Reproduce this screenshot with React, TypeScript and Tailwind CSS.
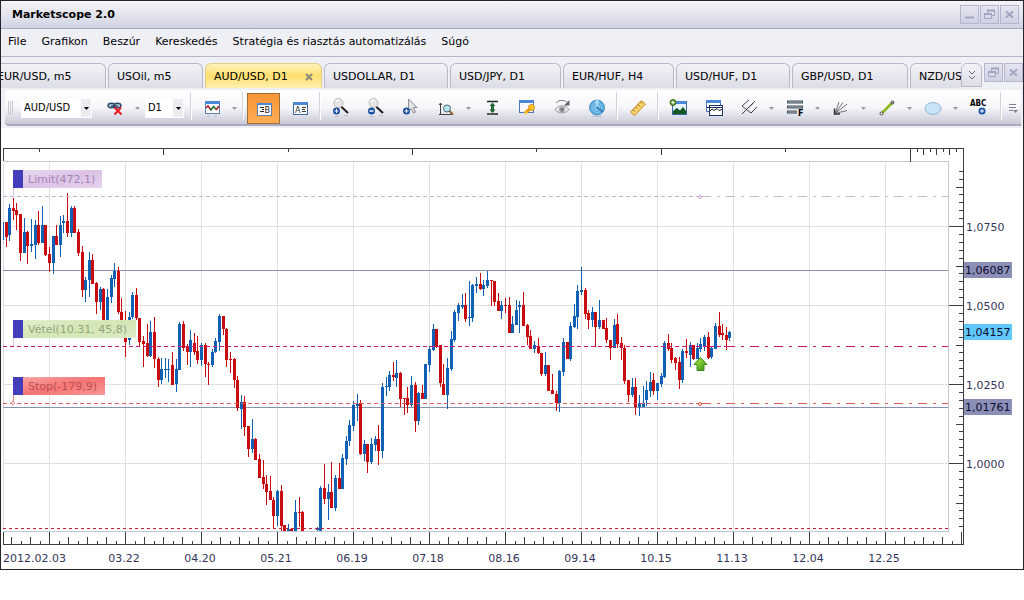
import type { ReactNode } from "react";

const TITLE = "Marketscope 2.0";

const MENU = ["File", "Grafikon", "Beszúr", "Kereskedés", "Stratégia és riasztás automatizálás", "Súgó"];

const TABS = [
  { label: "EUR/USD, m5", width: "w-[118px]" },
  { label: "USOil, m5", width: "w-[95px]" },
  { label: "AUD/USD, D1", width: "w-[117px]", active: true },
  { label: "USDOLLAR, D1", width: "w-[124px]" },
  { label: "USD/JPY, D1", width: "w-[111px]" },
  { label: "EUR/HUF, H4", width: "w-[111px]" },
  { label: "USD/HUF, D1", width: "w-[114px]" },
  { label: "GBP/USD, D1", width: "w-[116px]" },
  { label: "NZD/USD, D1", width: "w-[116px]" },
];

type Bar = [dir: "u" | "d", high: number, top: number, bottom: number, low: number];

// Each block holds consecutive daily bars; values are thirds of a pixel below `base`.
const BLOCKS: { first: number; base: number; bars: Bar[] }[] = [
  {
    first: -12,
    base: 140,
    bars: [
      ["d", 247, 247, 290, 320], ["u", 193, 204, 285, 302], ["d", 174, 204, 212, 240], ["d", 190, 210, 224, 270],
      ["d", 222, 222, 338, 362], ["u", 234, 276, 338, 340], ["d", 274, 276, 317, 371], ["u", 237, 313, 318, 335],
      ["u", 240, 255, 314, 356], ["d", 213, 255, 308, 314], ["u", 198, 255, 308, 308], ["d", 255, 255, 345, 348],
      ["d", 322, 342, 369, 396], ["u", 288, 289, 369, 401], ["d", 255, 288, 314, 316], ["u", 228, 255, 314, 350],
      ["u", 225, 243, 250, 278], ["d", 160, 243, 278, 290], ["u", 198, 204, 278, 290], ["d", 198, 204, 278, 278],
      ["d", 267, 276, 338, 348], ["d", 318, 336, 450, 470], ["u", 411, 420, 450, 485], ["u", 336, 360, 421, 472],
      ["d", 342, 360, 431, 433], ["d", 426, 429, 486, 521], ["u", 441, 447, 486, 510], ["d", 444, 447, 540, 560],
      ["u", 447, 471, 540, 560], ["u", 405, 414, 471, 488], ["u", 369, 392, 417, 440], ["d", 381, 392, 517, 522],
      ["d", 474, 516, 545, 560], ["d", 513, 540, 605, 650], ["u", 516, 530, 600, 616], ["u", 456, 465, 530, 538],
      ["d", 444, 465, 535, 540], ["d", 534, 535, 605, 617], ["d", 588, 603, 612, 680], ["d", 552, 609, 648, 650],
      ["u", 543, 576, 648, 650], ["d", 531, 576, 658, 683], ["d", 650, 656, 720, 740], ["u", 654, 687, 720, 732],
      ["u", 654, 687, 690, 714], ["u", 657, 687, 690, 726], ["d", 636, 675, 735, 735], ["u", 657, 687, 733, 755],
      ["u", 546, 552, 690, 690], ["d", 543, 552, 625, 632], ["d", 612, 620, 635, 676], ["u", 570, 599, 637, 680],
      ["d", 579, 610, 635, 646], ["d", 588, 632, 660, 672],
    ],
  },
  {
    first: 42,
    base: 290,
    bars: [
      ["u", 160, 165, 210, 228], ["d", 158, 165, 222, 260], ["d", 216, 222, 225, 284], ["u", 178, 186, 225, 230],
      ["u", 144, 153, 186, 188], ["u", 72, 79, 156, 182], ["d", 78, 79, 118, 134], ["d", 114, 117, 210, 230],
      ["d", 186, 206, 210, 248], ["d", 205, 207, 270, 293], ["d", 258, 270, 355, 362], ["u", 315, 336, 356, 416],
      ["d", 318, 336, 410, 437], ["d", 408, 408, 476, 500], ["u", 387, 447, 476, 488], ["d", 444, 447, 509, 509],
      ["d", 492, 507, 563, 563], ["d", 510, 560, 583, 597], ["d", 555, 582, 605, 644], ["d", 558, 603, 631, 631],
      ["d", 621, 630, 677, 715], ["u", 600, 603, 677, 707], ["d", 585, 603, 708, 722], ["d", 705, 706, 722, 722],
      ["u", 702, 716, 722, 722], ["d", 714, 716, 722, 722], ["u", 630, 666, 722, 722], ["d", 621, 665, 668, 710],
      ["d", 663, 666, 722, 722],
    ],
  },
  {
    first: 74,
    base: 290,
    bars: [
      ["u", 712, 714, 720, 722], ["u", 588, 594, 722, 722], ["d", 522, 594, 626, 642], ["u", 582, 606, 627, 690],
      ["d", 516, 606, 653, 655], ["u", 555, 564, 653, 662], ["d", 519, 564, 596, 597], ["u", 493, 504, 597, 597],
      ["u", 438, 452, 506, 524], ["u", 391, 405, 453, 467], ["u", 333, 346, 407, 422], ["u", 312, 342, 348, 392],
      ["d", 330, 339, 491, 494], ["u", 450, 462, 491, 513], ["d", 462, 462, 515, 548], ["u", 444, 462, 515, 521],
      ["u", 438, 447, 464, 482], ["d", 405, 447, 482, 524], ["u", 279, 291, 482, 503], ["u", 262, 288, 292, 318],
      ["u", 243, 255, 291, 302], ["d", 215, 255, 262, 273], ["u", 210, 249, 263, 290], ["d", 246, 249, 326, 350],
      ["d", 324, 324, 328, 374], ["d", 291, 324, 345, 368], ["u", 258, 285, 345, 350], ["d", 276, 285, 393, 426],
      ["u", 306, 309, 393, 405], ["d", 285, 309, 326, 327], ["u", 222, 222, 326, 326], ["u", 168, 178, 224, 245],
      ["u", 102, 117, 180, 182],
    ],
  },
  {
    first: 107,
    base: 250,
    bars: [
      ["d", 237, 237, 290, 293], ["d", 285, 286, 400, 410], ["d", 342, 403, 435, 435], ["u", 324, 353, 434, 476],
      ["u", 243, 267, 357, 362], ["u", 180, 186, 270, 276], ["u", 159, 165, 189, 212], ["u", 132, 165, 170, 178],
      ["d", 129, 165, 207, 215], ["u", 93, 200, 205, 227], ["u", 102, 105, 204, 215], ["u", 81, 102, 107, 130],
      ["d", 69, 101, 117, 119], ["u", 90, 105, 117, 137], ["u", 62, 90, 108, 113], ["d", 90, 90, 94, 168],
      ["d", 93, 93, 156, 168], ["d", 129, 153, 183, 183], ["u", 153, 166, 183, 206], ["d", 144, 165, 168, 188],
      ["d", 141, 165, 248, 248], ["u", 198, 222, 248, 248], ["u", 150, 180, 224, 226], ["u", 153, 165, 170, 250],
      ["d", 126, 165, 227, 228], ["d", 222, 225, 260, 285], ["d", 240, 258, 297, 298], ["u", 273, 286, 297, 310],
      ["d", 264, 288, 309, 312], ["d", 309, 309, 373, 377], ["u", 306, 346, 372, 377], ["d", 345, 345, 422, 423],
      ["d", 372, 420, 432, 433], ["d", 423, 432, 459, 482], ["u", 360, 363, 459, 486], ["u", 264, 276, 365, 377],
      ["d", 276, 276, 327, 327], ["u", 216, 228, 327, 332], ["u", 162, 198, 230, 234], ["u", 105, 123, 200, 237],
      ["u", 51, 120, 126, 135], ["d", 114, 120, 192, 206], ["d", 180, 188, 210, 237], ["u", 171, 186, 210, 230],
      ["d", 186, 186, 230, 292], ["u", 150, 210, 230, 237], ["d", 210, 210, 237, 237], ["d", 204, 234, 270, 278],
      ["d", 270, 270, 293, 329], ["u", 207, 225, 293, 293], ["d", 192, 222, 281, 293], ["d", 261, 278, 294, 329],
      ["d", 285, 293, 392, 402], ["d", 390, 390, 434, 455], ["u", 384, 411, 435, 440], ["d", 384, 411, 471, 494],
      ["u", 435, 459, 472, 497],
    ],
  },
  {
    first: 164,
    base: 290,
    bars: [
      ["u", 288, 340, 350, 351], ["u", 273, 300, 329, 347], ["u", 246, 275, 302, 320], ["d", 249, 270, 302, 314],
      ["u", 279, 279, 302, 329], ["u", 249, 258, 281, 290], ["u", 153, 159, 261, 264], ["d", 132, 159, 177, 182],
      ["d", 159, 173, 209, 218], ["d", 200, 204, 218, 240], ["d", 201, 216, 270, 297], ["u", 177, 183, 270, 278],
      ["d", 147, 183, 189, 204], ["u", 156, 165, 195, 230], ["d", 165, 165, 206, 209], ["u", 159, 174, 207, 207],
      ["u", 144, 163, 176, 185], ["u", 135, 141, 168, 182], ["d", 126, 141, 204, 206], ["u", 171, 174, 202, 206],
      ["u", 99, 108, 176, 176], ["d", 66, 108, 134, 141], ["d", 102, 129, 136, 150], ["d", 111, 134, 150, 180],
      ["u", 123, 126, 143, 153],
    ],
  },
];

const DATES = ["03.22", "04.20", "05.21", "06.19", "07.18", "08.16", "09.14", "10.15", "11.13", "12.04", "12.25"];

const PRICES = [
  { y: 227, label: "1,0750" },
  { y: 306, label: "1,0500" },
  { y: 385, label: "1,0250" },
  { y: 464, label: "1,0000" },
];

const PRICE_TAGS = [
  { y: 262, label: "1,06087", fill: "#8b8fb5" },
  { y: 324, label: "1,04157", fill: "#62c8fc" },
  { y: 399, label: "1,01761", fill: "#8b8fb5" },
];

const ORDERS = [
  { y: 170, lineY: 196, width: 79, label: "Limit(472,1)", fill: "#dcc3e6", text: "#a384b4", stem: "#d9c6e4" },
  { y: 320, lineY: 346, width: 113, label: "Vétel(10.31, 45,8)", fill: "#d3e6b4", text: "#90a67c", stem: "#d9c6e4" },
  { y: 377, lineY: 403, width: 82, label: "Stop(-179,9)", fill: "#f67474", text: "#b85252", stem: "#f08c8c" },
];

function range(n: number) {
  return Array.from({ length: n }, (_, i) => i);
}

function Candles() {
  return (
    <g shapeRendering="crispEdges">
      <rect x="3" y="222" width="1" height="18" fill="#1060b4" />
      {BLOCKS.flatMap(({ first, base, bars }) =>
        bars.map(([dir, high, top, bottom, low], i) => {
          const x = Math.floor(49.5 + ((first + i) * 76) / 21);
          const y = (v: number) => Math.round(base + v / 3);
          const fill = dir === "u" ? "#1060b4" : "#c80c10";
          return (
            <g key={first + i} fill={fill}>
              <rect x={x} y={y(high)} width="1" height={Math.max(1, y(low) - y(high))} />
              <rect x={x - 1} y={y(top)} width="3" height={Math.max(1, y(bottom) - y(top))} />
            </g>
          );
        })
      )}
    </g>
  );
}

function Ticks() {
  return (
    <g shapeRendering="crispEdges" fill="#3c3c44">
      <rect x="3" y="148" width="961" height="1" />
      <rect x="3" y="148" width="1" height="13" />
      <rect x="963" y="148" width="1" height="397" />
      <rect x="3" y="544" width="961" height="1" />
      <rect x="3" y="532" width="1" height="12" />
      {[39, 288, 536, 785].map((x) => (
        <rect key={x} x={x} y="148" width="1" height="4" />
      ))}
      {[163, 412, 661].map((x) => (
        <rect key={x} x={x} y="148" width="1" height="7" />
      ))}
      <rect x="910" y="148" width="1" height="14" />
      {range(7).map((i) => (
        <rect key={i} x={Math.round(916.5 + i * 6.5)} y="148" width="1" height={i % 2 ? 7 : 4} />
      ))}
      {range(101).map((i) => {
        // counted from the first grid line, eight ticks to a column
        const k = i - 4;
        const h = k % 8 === 0 ? 12 : k % 2 === 0 ? 7 : 3;
        return <rect key={i} x={Math.floor(49.5 + k * 9.5)} y={544 - h} width="1" height={h} />;
      })}
      {range(46).map((i) => {
        const k = i - 7;
        const w = k % 10 === 0 ? 14 : k % 5 === 0 ? 7 : 4;
        return <rect key={i} x={963 - w} y={Math.round(226 + k * 7.9)} width={w} height="1" />;
      })}
    </g>
  );
}

function Chart() {
  return (
    <svg viewBox="1 128 1022 441" className="block h-auto w-full" role="img" aria-label="AUD/USD, D1">
      <defs>
        <linearGradient id="gloss" x1="0" y1="0" x2="1" y2="1">
          <stop offset="0" stopColor="#fff" stopOpacity="0.35" />
          <stop offset="0.5" stopColor="#fff" stopOpacity="0" />
          <stop offset="1" stopColor="#fff" stopOpacity="0.25" />
        </linearGradient>
        <linearGradient id="buy" x1="0" y1="0" x2="1" y2="1">
          <stop offset="0.2" stopColor="#9be03c" />
          <stop offset="1" stopColor="#2f8a10" />
        </linearGradient>
      </defs>
      <rect x="1" y="128" width="1022" height="441" fill="#fff" />

      <g shapeRendering="crispEdges" fill="#e0e0e0">
        {range(12).map((i) => (
          <rect key={i} x={49 + i * 76} y="163" width="1" height="368" />
        ))}
        {PRICES.map((p) => (
          <rect key={p.label} x="4" y={p.y - 1} width="945" height="1" />
        ))}
      </g>
      <g shapeRendering="crispEdges" fill="#c6c6d4">
        <rect x="4" y="161" width="945" height="1" />
        <rect x="948" y="161" width="1" height="371" />
        <rect x="3" y="162" width="1" height="370" fill="#dcdce4" />
        <rect x="4" y="531" width="945" height="1" />
      </g>
      <Ticks />

      <g shapeRendering="crispEdges" fill="#8890ac">
        <rect x="3" y="270" width="945" height="1" />
        <rect x="3" y="407" width="945" height="1" />
      </g>
      <Candles />

      <g shapeRendering="crispEdges" fill="none" strokeWidth="1">
        <path d="M3 196.5H700" stroke="#ccb2d6" strokeDasharray="4 3" />
        <path d="M702 196.5H948" stroke="#c2bccb" strokeDasharray="9 6 3 6" />
        <path d="M3 346.5H726" stroke="#d0147c" strokeDasharray="4 3" />
        <path d="M726 346.5H948" stroke="#d0147c" strokeDasharray="9 6 3 6" />
        <path d="M3 403.5H700" stroke="#e05c5c" strokeDasharray="4 3" />
        <path d="M702 403.5H948" stroke="#e05c5c" strokeDasharray="9 6 3 6" />
        <path d="M3 528.5H948" stroke="#cc1c34" strokeDasharray="3 3" />
      </g>

      {ORDERS.map((o) => (
        <g key={o.label}>
          <path d={`M13.5 ${o.y + 18}V${o.lineY}`} stroke={o.stem} />
          <rect x="13" y={o.y} width="10" height="18" fill="#423ebc" />
          <rect x="23" y={o.y} width={o.width} height="18" fill={o.fill} />
          <rect x="23" y={o.y} width={o.width} height="18" fill="url(#gloss)" />
          <text x="28" y={o.y + 13} fontSize="11" fill={o.text}>
            {o.label}
          </text>
        </g>
      ))}
      <circle cx="700" cy="197" r="1.5" fill="#fff" stroke="#c39bd4" />
      <circle cx="700" cy="404" r="1.5" fill="#fff" stroke="#e04848" />
      <circle cx="13" cy="403" r="1.5" fill="#fff" stroke="#f08c8c" />
      <path d="M700.5 357.5 707 364.5H704V370.5H697V364.5H694Z" fill="url(#buy)" stroke="#3c8a18" />

      <g fontSize="11" fill="#34345a">
        {PRICES.map((p) => (
          <text key={p.label} x="966" y={p.y + 4}>
            {p.label}
          </text>
        ))}
        <text x="3" y="562">2012.02.03</text>
        {DATES.map((d, i) => (
          <text key={d} x={124 + i * 76} y="562" textAnchor="middle">
            {d}
          </text>
        ))}
      </g>
      {PRICE_TAGS.map((t) => (
        <g key={t.label}>
          <rect x="964" y={t.y} width="48" height="16" fill={t.fill} />
          <text x="965" y={t.y + 12} fontSize="11" fill="#0c0c30">
            {t.label}
          </text>
        </g>
      ))}
    </svg>
  );
}

function Icon({ children }: { children: ReactNode }) {
  return (
    <svg viewBox="0 0 20 20" className="size-5" fill="none" aria-hidden="true">
      {children}
    </svg>
  );
}

function Tool({ label, children }: { label: string; children: ReactNode }) {
  return (
    <button type="button" aria-label={label} className="flex w-[35px] shrink-0 items-center justify-center">
      <Icon>{children}</Icon>
    </button>
  );
}

function More({ label }: { label: string }) {
  return (
    <button type="button" aria-label={label} className="flex w-[11px] shrink-0 items-center justify-center">
      <svg viewBox="0 0 5 3" className="h-[3px] w-[5px]" aria-hidden="true">
        <path d="M0 0h5L2.5 3z" fill="#9a9aa6" />
      </svg>
    </button>
  );
}

function Divider() {
  return <span className="mx-[2px] mb-1 w-[2px] shrink-0 border-l border-[#d4d4e0] bg-white" />;
}

function Combo({ label, value, width }: { label: string; value: string; width: string }) {
  return (
    <div className={`relative my-auto h-5 shrink-0 ${width}`}>
      <select
        aria-label={label}
        defaultValue={value}
        className="h-5 w-full appearance-none bg-white pl-[3px] font-['DejaVu_Sans_Condensed','DejaVu_Sans',sans-serif] text-[11px] text-black outline-none"
      >
        <option>{value}</option>
      </select>
      <span className="pointer-events-none absolute inset-y-px right-px flex w-[10px] items-center justify-center bg-[#ebebf0]">
        <svg viewBox="0 0 5 3" className="h-[3px] w-[5px]" aria-hidden="true">
          <path d="M0 0h5L2.5 3z" fill="#000" />
        </svg>
      </span>
    </div>
  );
}

const PLUS_BALL = (
  <>
    <circle cx="5.5" cy="13" r="3.5" fill="#1c50a0" />
    <path d="M3.5 13h4M5.5 11v4" stroke="#fff" />
  </>
);

const LENS = (
  <>
    <path d="M10 8.5l7 6.5" stroke="#202020" strokeWidth="2" />
    <circle cx="7.5" cy="5" r="4.5" fill="#e6e6e8" stroke="#c0bcb4" />
    <path d="M5 4a3 3 0 0 1 3-2" stroke="#fff" strokeWidth="1.5" />
    <path d="M4 18.5h4M13 17.5h4" stroke="#bcbccc" />
  </>
);

const WINDOW_BOX = (
  <>
    <rect x="3.5" y="4.5" width="14" height="12" fill="#fff" stroke="#3868a8" />
    <path d="M3 5.5h15" stroke="#4c88d8" strokeWidth="3" />
  </>
);

function Toolbar() {
  return (
    <div
      role="toolbar"
      aria-label="Eszköztár"
      className="mr-0.5 ml-1 flex h-[36px] overflow-hidden rounded-l-sm border-b-2 border-[#a9a9bf] bg-linear-to-b from-white via-[#f7f7fb] to-[#c9c9d8] pt-0.5"
    >
      <span className="my-auto mr-[8px] ml-[3px] flex h-3.5 w-[5px] shrink-0 justify-between" aria-hidden="true">
        <i className="w-px bg-[#c9c9d4]" />
        <i className="w-px bg-[#c9c9d4]" />
        <i className="w-px bg-[#c9c9d4]" />
      </span>
      <Combo label="Instrumentum" value="AUD/USD" width="w-[71px]" />
      <span className="w-[5px] shrink-0" />
      <Tool label="Kapcsolat bontása">
        <ellipse cx="6.5" cy="7.5" rx="3.5" ry="2.2" fill="#b8cce0" stroke="#284868" strokeWidth="1.4" />
        <ellipse cx="12.5" cy="7.5" rx="3.5" ry="2.2" fill="#b8cce0" stroke="#284868" strokeWidth="1.4" />
        <path d="M6 8h7" stroke="#101c30" />
        <path d="M9.5 9.5l7 7M16 9.5l-6.5 7" stroke="#e81c20" strokeWidth="2" />
      </Tool>
      <More label="Kapcsolat lehetőségei" />
      <span className="w-[2px] shrink-0" />
      <Combo label="Időszak" value="D1" width="w-[39px]" />
      <span className="w-[4px] shrink-0" />
      <Divider />
      <Tool label="Diagram">
        <rect x="3.5" y="3.5" width="14" height="12" fill="#fff" stroke="#607ca8" />
        <path d="M3 4.5h15" stroke="#4c88d8" strokeWidth="3" />
        <path d="M4 10l2-2 3 4" stroke="#b02020" strokeWidth="1.5" />
        <path d="M8 11l1 1 2.5-3.5 2.5 3" stroke="#287028" strokeWidth="1.5" />
        <path d="M14 12l3-4" stroke="#b02020" strokeWidth="1.5" />
        <path d="M5 18h3M12 18h3" stroke="#bcbccc" />
      </Tool>
      <More label="Diagram típusa" />
      <Divider />
      <button
        type="button"
        aria-label="Vételi ár"
        aria-pressed="true"
        className="mt-px mr-0.5 ml-px flex w-[33px] shrink-0 items-center justify-center border border-[#987038] bg-linear-to-b from-[#f89438] to-[#ffac54]"
      >
        <Icon>
          <rect x="3.5" y="4.5" width="14" height="12" fill="#fff" stroke="#607ca8" />
          <path d="M3 5h15" stroke="#4c88d8" strokeWidth="2" />
          <path d="M6 8.5h4M8 10.5h2M6 12.5h4" stroke="#282828" />
          <text x="10.5" y="14" fontSize="8" fill="#202020">B</text>
        </Icon>
      </button>
      <Tool label="Eladási ár">
        {WINDOW_BOX}
        <path d="M12 9.5h4M12 11.5h3M12 13.5h4" stroke="#383838" />
        <text x="5" y="15" fontSize="8" fill="#303030">A</text>
      </Tool>
      <Divider />
      <Tool label="Nagyítás">
        {LENS}
        {PLUS_BALL}
      </Tool>
      <Tool label="Kicsinyítés">
        {LENS}
        <circle cx="5.5" cy="13" r="3.5" fill="#1c50a0" />
        <path d="M3.5 13h4" stroke="#fff" strokeWidth="1.5" />
      </Tool>
      <Tool label="Kijelölés nagyítása">
        <path d="M7.5 1v12l3-2.5 2 4.5 2-1-2-4.5h3.5z" fill="#e4e4e8" stroke="#8c8c98" />
        {PLUS_BALL}
      </Tool>
      <Tool label="Függőleges nagyítás">
        <path d="M4.5 5v12M3 7l1.5-2L6 7M3 16.5h13" stroke="#404040" />
        <circle cx="11" cy="10.5" r="3.5" fill="#b8e4f0" stroke="#486878" />
        <path d="M13.5 13l3.5 3.5" stroke="#906030" strokeWidth="2" />
      </Tool>
      <More label="Nagyítás lehetőségei" />
      <Tool label="Automatikus méretezés">
        <path d="M5 3.5h11M5 16h11" stroke="#202820" strokeWidth="1.5" />
        <path d="M10.5 6v8" stroke="#286838" strokeWidth="3" />
        <path d="M7.5 8l3-3.5 3 3.5zM7.5 11.5l3 3.5 3-3.5z" fill="#286838" />
      </Tool>
      <Tool label="Beállítások">
        <rect x="2.5" y="2.5" width="14" height="12" fill="#f8f8fc" stroke="#4878b8" />
        <path d="M2 3.5h15" stroke="#4c88d8" strokeWidth="3" />
        <path d="M8 15l5-4" stroke="#e89c10" strokeWidth="3" />
        <circle cx="14.5" cy="9.5" r="3" fill="#fcc028" stroke="#d89010" />
        <circle cx="9" cy="14.5" r="1.5" fill="#fcc028" />
      </Tool>
      <Tool label="Megjelenítés">
        <path d="M3 11.5c3-5 11-5 14 0-3 4.5-11 4.5-14 0z" fill="#ececf0" stroke="#9c9ca4" />
        <circle cx="10" cy="11.5" r="3" fill="#a0a0a8" />
        <circle cx="10" cy="11.5" r="1" fill="#505058" />
        <path d="M4 5c3-3.5 9-3.5 12 0" stroke="#787880" />
        <path d="M17.5 2v5.5H12z" fill="#606068" />
      </Tool>
      <Tool label="Piac">
        <circle cx="10" cy="9.5" r="7.5" fill="#5cace0" stroke="#4494c8" />
        <circle cx="10" cy="9.5" r="5" stroke="#8cccf0" />
        <circle cx="10" cy="9.5" r="2.5" stroke="#a8dcf4" />
        <path d="M10 9.5L8 2.5a7 7 0 0 1 4 0z" fill="#b4e0f4" />
        <path d="M10 9.5l6 4.5" stroke="#286ca0" strokeWidth="1.5" />
        <path d="M5 18.5h10" stroke="#b0c4d8" />
      </Tool>
      <Divider />
      <Tool label="Vonalzó">
        <path d="M2.500 14L13.500 2.500 17.500 6 6.500 17.500z" fill="#fcd46c" stroke="#c08c28" />
        <path d="M5 11.500l2 2M7.500 9l1.500 1.500M10 6.500l2 2M12.500 4l1.500 1.500" stroke="#805c18" />
      </Tool>
      <Divider />
      <Tool label="Kép hozzáadása">
        <rect x="3.5" y="3.5" width="14" height="13" fill="#e8f4fc" stroke="#3868a8" />
        <path d="M4 4.5h13" stroke="#4c88d8" strokeWidth="3" />
        <path d="M4 16v-3l4-3 3 2.5L14 9l3 4v3z" fill="#145820" />
        <circle cx="4" cy="4.5" r="3" fill="#68a040" stroke="#386820" />
        <path d="M2.5 4.5h3M4 3v3" stroke="#fff" />
      </Tool>
      <Tool label="Ablakok">
        <rect x="2.5" y="2.5" width="14" height="11" fill="#fff" stroke="#4878b8" />
        <path d="M2 3.5h15" stroke="#4c88d8" strokeWidth="3" />
        <rect x="5.5" y="7.5" width="13" height="10" fill="#fff" stroke="#1c3460" />
        <path d="M3 9.5h16" stroke="#1c3460" />
        <path d="M6 13l2-2 2 1.5 3-2 2 2 3-1" stroke="#202020" />
      </Tool>
      <Tool label="Andrews-villa">
        <path d="M3 16L16 3M3 8l9 7M3 8l7-6M7.500 11.500l7-6.500M12 15l6-6" stroke="#404048" />
      </Tool>
      <More label="Villa lehetőségei" />
      <Tool label="Fibonacci">
        {[4, 9, 14].map((y) => (
          <g key={y}>
            <path d={`M2 ${y}h${y === 14 ? 10 : 16}`} stroke="#40505c" strokeWidth="3" />
            <path d={`M3 ${y}h${y === 14 ? 9 : 14}`} stroke="#a8b4bc" />
          </g>
        ))}
        <text x="13" y="18" fontSize="8" fontWeight="bold" fill="#000">F</text>
      </Tool>
      <More label="Fibonacci lehetőségei" />
      <Tool label="Legyező">
        <path d="M4 15.5L8 4M4 15.5l8-11M4 15.5L16 6M4 15.5l12-3" stroke="#70707c" />
        <path d="M3.5 10.5v5.500h5.500" stroke="#303038" strokeWidth="1.5" />
      </Tool>
      <More label="Legyező lehetőségei" />
      <Tool label="Trendvonal">
        <path d="M4.5 15.5l11-11" stroke="#8cb81c" strokeWidth="2.5" />
        <circle cx="4.5" cy="15.5" r="1.5" fill="#fff" stroke="#404040" />
        <circle cx="15.5" cy="4.5" r="1.5" fill="#b0b0b0" stroke="#404040" />
      </Tool>
      <More label="Vonal lehetőségei" />
      <Tool label="Ellipszis">
        <ellipse cx="10" cy="10.5" rx="8" ry="6" fill="#c8e4f6" stroke="#94b4d4" />
      </Tool>
      <More label="Alakzat lehetőségei" />
      <Tool label="Szöveg">
        <text x="1" y="8" fontSize="8" fontWeight="bold" fontFamily="DejaVu Sans Condensed" fill="#000">ABC</text>
        <circle cx="13" cy="13" r="3.5" fill="#1c50a0" />
        <path d="M11 13h4M13 11v4" stroke="#fff" />
      </Tool>
      <span className="w-[2px] shrink-0" />
      <Divider />
      <button type="button" aria-label="További gombok" className="flex flex-1 items-center justify-center">
        <svg viewBox="0 0 10 10" className="size-2.5" fill="none" aria-hidden="true">
          <path d="M1 1.5h7M1 4.5h7M1 7.5h4" stroke="#80808c" />
          <path d="M5 7h5L7.5 10z" fill="#80808c" />
        </svg>
      </button>
    </div>
  );
}

function WindowButton({ kind, label }: { kind: "min" | "restore" | "close"; label: string }) {
  return (
    <button
      type="button"
      aria-label={label}
      className="flex size-[19px] shrink-0 items-center justify-center border border-[#b4b6d0] bg-linear-to-b from-[#e4e5f0] to-[#cfd1e2]"
    >
      <svg viewBox="0 0 11 11" className="size-[11px]" fill="none" stroke="#a2a4c0" aria-hidden="true">
        {kind === "min" && <path d="M1 8.5h9" strokeWidth="2" />}
        {kind === "restore" && (
          <>
            <path d="M3.5 4V1.5h7v5H8" />
            <path d="M3 1.5h8M0 5h8" strokeWidth="2" />
            <path d="M.5 4.5h7v5h-7z" />
          </>
        )}
        {kind === "close" && <path d="M2 2.5l7 6M9 2.5l-7 6" strokeWidth="2" />}
      </svg>
    </button>
  );
}

function TabStrip() {
  return (
    <div className="flex h-[33px] pt-1.5">
      <div role="tablist" className="flex h-[25px] min-w-0 flex-1 gap-[2px] overflow-hidden">
        {TABS.map((t, i) => (
          <div
            key={t.label}
            className={`flex shrink-0 items-center justify-between rounded-t-md border border-b-0 pt-px pr-2 pl-2 ${t.width} ${
              i === 0 ? "-ml-[13px]" : ""
            } ${
              t.active
                ? "border-[#e4cc84] bg-linear-to-b from-[#fff2b8] via-[#ffdf6c] to-[#fff0b0]"
                : "border-[#b8b8c8] bg-linear-to-b from-[#f2f2f7] to-[#dddde7]"
            }`}
          >
            <button type="button" role="tab" aria-selected={!!t.active} className="whitespace-nowrap">
              {t.label}
            </button>
            {t.active ? (
              <button type="button" aria-label="Lap bezárása">
                <svg viewBox="0 0 8 8" className="size-2" aria-hidden="true">
                  <path d="M1 1l6 6M7 1L1 7" stroke="#88887c" strokeWidth="2" />
                </svg>
              </button>
            ) : null}
          </div>
        ))}
      </div>
      <button
        type="button"
        aria-label="További lapok"
        className="flex h-[24px] w-[21px] shrink-0 items-center justify-center rounded-t-md border border-[#b8b8c8] bg-linear-to-b from-[#f2f2f7] to-[#dddde7]"
      >
        <svg viewBox="0 0 8 10" className="h-2.5 w-2" fill="none" stroke="#686874" aria-hidden="true">
          <path d="M1 1l3 3 3-3M1 6l3 3 3-3" />
        </svg>
      </button>
      <div className="ml-0.5 flex gap-px">
        <WindowButton kind="restore" label="Diagram előző mérete" />
        <WindowButton kind="close" label="Diagram bezárása" />
      </div>
    </div>
  );
}

export default function App() {
  return (
    <div className="min-h-screen bg-white font-['DejaVu_Sans',Verdana,sans-serif] text-[11px] leading-4 text-black">
      <div className="border border-[#26222e] bg-[#efeff6]">
        <header className="flex h-[28px] items-center justify-between border-b border-[#a8a8bf] bg-linear-to-b from-[#f4f4f6] to-[#d2d4e4] pr-1 pl-[11px]">
          <h1 className="pt-px font-bold">{TITLE}</h1>
          <div className="flex gap-px">
            <WindowButton kind="min" label="Kis méret" />
            <WindowButton kind="restore" label="Előző méret" />
            <WindowButton kind="close" label="Bezárás" />
          </div>
        </header>
        <nav className="flex h-[28px] items-center gap-[15px] border-b border-[#b6b6c8] pb-0.5 pl-[7px]">
          {MENU.map((m) => (
            <button key={m} type="button" className="whitespace-nowrap">
              {m}
            </button>
          ))}
        </nav>
        <TabStrip />
        <Toolbar />
        <main className="border-t-2 border-[#efeff6]">
          <Chart />
        </main>
      </div>
    </div>
  );
}
